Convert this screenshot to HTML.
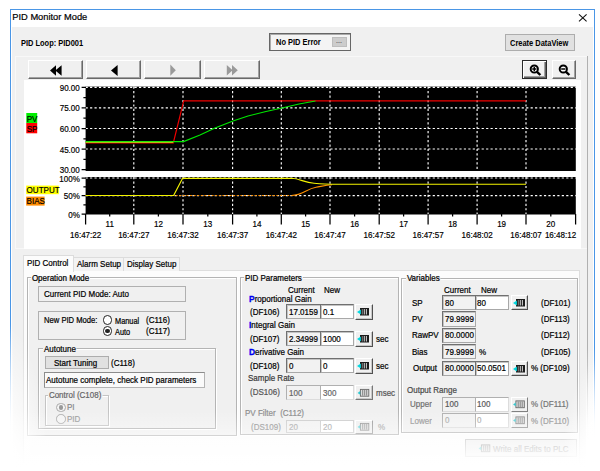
<!DOCTYPE html>
<html><head><meta charset="utf-8"><title>PID Monitor Mode</title>
<style>
html,body{margin:0;padding:0;background:#fff;}
body{width:600px;height:471px;overflow:hidden;position:relative;font-family:"Liberation Sans",sans-serif;font-size:8px;color:#000;}
.a{position:absolute;box-sizing:border-box;}
.t{position:absolute;white-space:pre;line-height:10px;height:10px;font-size:9.1px;transform:scaleX(.88);transform-origin:0 50%;-webkit-text-stroke:0.22px currentColor;}
.t b{font-size:9.6px;color:#0000f0;-webkit-text-stroke:0.3px #0000f0;line-height:0;}
.b{font-weight:bold;font-size:8.4px;transform:scaleX(.89);-webkit-text-stroke:0;}
#win{left:10px;top:9px;width:585px;height:470px;border:1px solid #4a96e6;background:#fff;}
#body{left:12px;top:26.5px;width:581px;height:450px;background:#f0f0f0;}
.btn{background:#f0f0f0;border:1px solid;border-color:#fff #696969 #696969 #fff;box-shadow:inset -1px -1px 0 #a0a0a0;}
.sb{background:#f0f0f0;border:1px solid;border-color:#fff #505050 #505050 #fff;box-shadow:inset -1px -1px 0 #c8c8c8;}
.flat{background:#e1e1e1;border:1px solid #adadad;}
.grp{border:1px solid #b4b4b4;background:#f0f0f0;box-shadow:inset 1px 1px 0 #fff, 1px 1px 0 #fff;}
.leg{background:linear-gradient(#fcfcfc 0,#fcfcfc 45%,#f0f0f0 45%);padding:0 1px;}
.leg2{background:#f0f0f0;padding:0 1px;}
.sunk{border:1px solid;border-color:#707070 #a8a8a8 #a8a8a8 #707070;box-shadow:inset 1px 1px 0 #c4c4c4;background:#f2f2f2;}
.sunk.w{background:#fff;}
.sunk.d{border-color:#b0b0b0 #dcdcdc #dcdcdc #b0b0b0;box-shadow:none;}
.box{border:1px solid #b0b0b0;background:#f0f0f0;}
.g1{color:#555;}
.g2{color:#a8a8a8;}
.radio{width:9.8px;height:9.8px;border-radius:50%;border:1.1px solid #222;background:#fff;}
.radio.on::after{content:"";position:absolute;left:1.5px;top:1.5px;width:4.6px;height:4.6px;border-radius:50%;background:#222;}
.radio.dis{border-color:#aaa;background:#f4f4f4;}
.radio.dis.on::after{background:#999;}
</style></head><body>
<div class="a" id="win"></div>
<div class="a" id="body"></div>
<!-- title bar -->
<span class="t" style="left:12.3px;top:11.8px;font-size:9.3px;line-height:11px;height:11px;transform:none;-webkit-text-stroke:0.2px #000;">PID Monitor Mode</span>
<svg class="a" style="left:578px;top:13px" width="10" height="10" viewBox="0 0 10 10"><path d="M1 1.4 L8.6 8.4 M8.6 1.4 L1 8.4" stroke="#111" stroke-width="1.1" fill="none"/></svg>
<!-- top row -->
<span class="t b" style="left:21px;top:38px;">PID Loop: PID001</span>
<div class="a" style="left:269px;top:33px;width:82px;height:17.5px;border:1px solid #666;box-shadow:inset 1px 1px 0 #aaa;background:#f4f4f4;"></div>
<span class="t b" style="left:276px;top:37px;">No PID Error</span>
<div class="a" style="left:332px;top:37px;width:15px;height:10px;background:#ccc;border:1px solid #bdbdbd;"></div>
<span class="t" style="left:336px;top:36px;color:#666;font-size:8px;">...</span>
<div class="a flat" style="left:505px;top:34px;width:70px;height:17px;"></div>
<span class="t b" style="left:510px;top:38px;">Create DataView</span>
<!-- chart panel -->
<div class="a" style="left:15px;top:56px;width:573px;height:193px;border:1px solid #f8f8f8;border-right:1px solid #a8a8a8;"></div>
<div class="a" style="left:587px;top:56px;width:1px;height:420px;background:#b0b0b0;"></div>
<div class="a" style="left:24px;top:80px;width:557px;height:169px;background:#fff;"></div>
<!-- nav buttons -->
<div class="a btn" style="left:28px;top:60px;width:55px;height:18.5px;"></div>
<div class="a btn" style="left:85.5px;top:60px;width:55px;height:18.5px;"></div>
<div class="a btn" style="left:144px;top:60px;width:56.5px;height:18.5px;"></div>
<div class="a btn" style="left:203.5px;top:60px;width:56px;height:18.5px;"></div>
<svg class="a" style="left:27px;top:60px" width="240" height="18" viewBox="0 0 240 18">
<path d="M23 10.5 L29 5.2 L29 15.8 Z M28.3 10.5 L34.6 5.2 L34.6 15.8 Z" fill="#000"/>
<path d="M84 10.5 L90.6 5 L90.6 16 Z" fill="#000"/>
<path d="M143.3 4.6 L148.8 10.2 L143.3 15.8 Z" fill="#9a9a9a"/>
<path d="M199.8 5 L205.6 10.3 L199.8 15.6 Z M205 5 L210.8 10.3 L205 15.6 Z" fill="#9a9a9a"/>
</svg>
<!-- zoom buttons -->
<div class="a" style="left:522px;top:60px;width:24.5px;height:19px;background:#f0f0f0;border:1px solid #2a2a2a;box-shadow:inset 1px 1px 0 #fff, inset -1px -1px 0 #606060, inset -2px -2px 0 #a0a0a0;"></div>
<div class="a btn" style="left:552px;top:60px;width:24px;height:19px;"></div>
<svg class="a" style="left:522px;top:60px" width="56" height="20" viewBox="0 0 56 20">
<circle cx="12.3" cy="9" r="3.6" fill="#fff" stroke="#000" stroke-width="2"/><path d="M15 11.8 L18.4 15" stroke="#000" stroke-width="2.4"/><path d="M10.2 9 H14.4 M12.3 6.9 V11.1" stroke="#000" stroke-width="1.5"/>
<circle cx="41.3" cy="9" r="3.6" fill="#fff" stroke="#000" stroke-width="2"/><path d="M44 11.8 L47.4 15" stroke="#000" stroke-width="2.4"/><path d="M39.2 9 H43.4" stroke="#000" stroke-width="1.5"/>
</svg>
<svg class="a" style="left:24px;top:80px" width="557" height="169" viewBox="24 80 557 169" font-family="Liberation Sans, sans-serif" font-size="9.7" fill="#000" stroke="#000" stroke-width="0">
<rect x="85.6" y="86.6" width="490.2" height="84.4" fill="#000"/>
<rect x="85.6" y="177" width="490.2" height="37.5" fill="#000"/>
<path d="M85.6 87.3 H575.8 M85.6 107.9 H575.8 M85.6 128.5 H575.8 M85.6 149.0 H575.8 M85.6 178.0 H575.8 M85.6 195.6 H575.8 M133.8 86.6 V171 M133.8 177 V214.5 M183.0 86.6 V171 M183.0 177 V214.5 M232.6 86.6 V171 M232.6 177 V214.5 M281.3 86.6 V171 M281.3 177 V214.5 M330.0 86.6 V171 M330.0 177 V214.5 M379.2 86.6 V171 M379.2 177 V214.5 M428.1 86.6 V171 M428.1 177 V214.5 M477.1 86.6 V171 M477.1 177 V214.5 M526.0 86.6 V171 M526.0 177 V214.5" stroke="#fff" stroke-width="1.15" stroke-dasharray="2.2 2.25" fill="none"/>
<path d="M81.6 87.3 H86 M81.6 107.9 H86 M81.6 128.5 H86 M81.6 149.0 H86 M81.6 169.6 H86 M83.4 97.6 H86 M83.4 118.2 H86 M83.4 138.8 H86 M83.4 159.3 H86 M81.6 178.0 H86 M81.6 195.6 H86 M81.6 214.0 H86 M83.4 186.8 H86 M83.4 204.8 H86 M85.6 214 V224.6 M133.8 214 V224.6 M183.0 214 V224.6 M232.6 214 V224.6 M281.3 214 V224.6 M330.0 214 V224.6 M379.2 214 V224.6 M428.1 214 V224.6 M477.1 214 V224.6 M526.0 214 V224.6 M575.6 214 V224.6 M109.7 214 V216.6 M158.4 214 V216.6 M207.8 214 V216.6 M256.9 214 V216.6 M305.6 214 V216.6 M354.6 214 V216.6 M403.6 214 V216.6 M452.6 214 V216.6 M501.6 214 V216.6 M550.8 214 V216.6" stroke="#000" stroke-width="1.25" fill="none"/>
<g fill="none" stroke-width="1.15" stroke-linejoin="round">
<path d="M85.6 143 H173.3 L183.7 100.8 H526" stroke="#f00000"/>
<path d="M85.6 141.6 H183.5 L200 135 L215 128 L233 121 L248 116 L266 111.5 L282 108 L299 104 L315.5 101" stroke="#00e800"/>
<path d="M85.6 142.35 H173" stroke="#d4e818" stroke-width="0.9"/>
<path d="M85.6 195.5 H291.5" stroke="#ff9000" stroke-dasharray="2 1.6"/>
<path d="M291.5 195.5 C303 195.5 306 189 316 187.3 C322 186.2 326 185 332 184.7" stroke="#ff9000"/>
<path d="M85.6 195.5 H173.6 L182.6 178.3 H291.5 C300 178.5 304 182.6 314 183.3 C322 183.9 326 184.2 332 184.2 H526" stroke="#f4f400"/>
</g>
<text transform="translate(79.8,90.8) scale(0.83,1)" text-anchor="end" stroke-width="0.2">90.00</text>
<text transform="translate(79.8,111.4) scale(0.83,1)" text-anchor="end" stroke-width="0.2">75.00</text>
<text transform="translate(79.8,132.0) scale(0.83,1)" text-anchor="end" stroke-width="0.2">60.00</text>
<text transform="translate(79.8,152.5) scale(0.83,1)" text-anchor="end" stroke-width="0.2">45.00</text>
<text transform="translate(79.8,173.1) scale(0.83,1)" text-anchor="end" stroke-width="0.2">30.00</text>
<text transform="translate(79.8,181.5) scale(0.83,1)" text-anchor="end" stroke-width="0.2">100%</text>
<text transform="translate(79.8,199.1) scale(0.83,1)" text-anchor="end" stroke-width="0.2">50%</text>
<text transform="translate(79.8,217.5) scale(0.83,1)" text-anchor="end" stroke-width="0.2">0%</text>
<text transform="translate(109.7,226.8) scale(0.83,1)" text-anchor="middle" stroke-width="0.2">11</text>
<text transform="translate(158.4,226.8) scale(0.83,1)" text-anchor="middle" stroke-width="0.2">12</text>
<text transform="translate(207.8,226.8) scale(0.83,1)" text-anchor="middle" stroke-width="0.2">13</text>
<text transform="translate(256.9,226.8) scale(0.83,1)" text-anchor="middle" stroke-width="0.2">14</text>
<text transform="translate(305.6,226.8) scale(0.83,1)" text-anchor="middle" stroke-width="0.2">15</text>
<text transform="translate(354.6,226.8) scale(0.83,1)" text-anchor="middle" stroke-width="0.2">16</text>
<text transform="translate(403.6,226.8) scale(0.83,1)" text-anchor="middle" stroke-width="0.2">17</text>
<text transform="translate(452.6,226.8) scale(0.83,1)" text-anchor="middle" stroke-width="0.2">18</text>
<text transform="translate(501.6,226.8) scale(0.83,1)" text-anchor="middle" stroke-width="0.2">19</text>
<text transform="translate(550.8,226.8) scale(0.83,1)" text-anchor="middle" stroke-width="0.2">20</text>
<text transform="translate(85.6,238.4) scale(0.83,1)" text-anchor="middle" stroke-width="0.2">16:47:22</text>
<text transform="translate(133.8,238.4) scale(0.83,1)" text-anchor="middle" stroke-width="0.2">16:47:27</text>
<text transform="translate(183.0,238.4) scale(0.83,1)" text-anchor="middle" stroke-width="0.2">16:47:32</text>
<text transform="translate(232.6,238.4) scale(0.83,1)" text-anchor="middle" stroke-width="0.2">16:47:37</text>
<text transform="translate(281.3,238.4) scale(0.83,1)" text-anchor="middle" stroke-width="0.2">16:47:42</text>
<text transform="translate(330.0,238.4) scale(0.83,1)" text-anchor="middle" stroke-width="0.2">16:47:47</text>
<text transform="translate(379.2,238.4) scale(0.83,1)" text-anchor="middle" stroke-width="0.2">16:47:52</text>
<text transform="translate(428.1,238.4) scale(0.83,1)" text-anchor="middle" stroke-width="0.2">16:47:57</text>
<text transform="translate(477.1,238.4) scale(0.83,1)" text-anchor="middle" stroke-width="0.2">16:48:02</text>
<text transform="translate(526.0,238.4) scale(0.83,1)" text-anchor="middle" stroke-width="0.2">16:48:07</text>
<text transform="translate(576.2,238.4) scale(0.83,1)" text-anchor="end" stroke-width="0.2">16:48:12</text>
<rect x="26.3" y="113" width="10.9" height="10" fill="#00f000"/><text transform="translate(26.7,121.7) scale(0.83,1)" text-anchor="start" stroke-width="0.2">PV</text>
<rect x="26.3" y="123" width="10.9" height="10.3" fill="#ff0000"/><text transform="translate(26.7,131.8) scale(0.83,1)" text-anchor="start" stroke-width="0.2">SP</text>
<rect x="26.2" y="185.6" width="32.6" height="8.6" fill="#ffff00"/><text transform="translate(26.6,193.2) scale(0.83,1)" text-anchor="start" stroke-width="0.2">OUTPUT</text>
<rect x="26.2" y="196.6" width="18.4" height="9" fill="#ff8c00"/><text transform="translate(26.6,204.4) scale(0.83,1)" text-anchor="start" stroke-width="0.2">BIAS</text>
</svg>
<div class="a" style="left:23px;top:270px;width:557px;height:200px;background:#fcfcfc;border:1px solid #dedede;"></div>
<div class="a" style="left:73px;top:257px;width:51px;height:14px;background:#f3f3f3;border:1px solid #dcdcdc;border-bottom:none;"></div>
<div class="a" style="left:123px;top:257px;width:57px;height:14px;background:#f3f3f3;border:1px solid #dcdcdc;border-bottom:none;"></div>
<div class="a" style="left:23px;top:255px;width:51px;height:17px;background:#fcfcfc;border:1px solid #dcdcdc;border-bottom:none;"></div>
<span class="t" style="left:27px;top:258px;">PID Control</span>
<span class="t" style="left:77px;top:259px;">Alarm Setup</span>
<span class="t" style="left:127px;top:259px;">Display Setup</span>
<!-- Operation Mode -->
<div class="a grp" style="left:27px;top:277px;width:210px;height:159px;"></div>
<span class="t leg" style="left:31px;top:273px;">Operation Mode</span>
<div class="a box" style="left:38px;top:286px;width:148px;height:16px;"></div>
<span class="t" style="left:44px;top:289px;">Current PID Mode: Auto</span>
<div class="a box" style="left:38px;top:311px;width:148px;height:29px;"></div>
<span class="t" style="left:44px;top:315px;transform:scaleX(.84)">New PID Mode:</span>
<div class="a radio" style="left:102.6px;top:315.4px;"></div>
<span class="t" style="left:114.5px;top:316px;font-size:8.4px">Manual</span>
<span class="t" style="left:146px;top:315px;">(C116)</span>
<div class="a radio on" style="left:102.6px;top:326.2px;"></div>
<span class="t" style="left:114.5px;top:327px;font-size:8.4px">Auto</span>
<span class="t" style="left:146px;top:326px;">(C117)</span>
<!-- Autotune -->
<div class="a grp" style="left:38px;top:347.5px;width:178px;height:81.5px;"></div>
<span class="t leg2" style="left:43px;top:343.6px;">Autotune</span>
<div class="a flat" style="left:44.5px;top:356px;width:64.5px;height:13px;"></div>
<span class="t" style="left:53.8px;top:358px;">Start Tuning</span>
<span class="t" style="left:111px;top:358px;">(C118)</span>
<div class="a box" style="left:44px;top:372px;width:161px;height:16px;background:#fafafa;border-color:#8c8c8c #b4b4b4 #b4b4b4 #8c8c8c"></div>
<span class="t" style="left:46px;top:375px;">Autotune complete, check PID parameters</span>
<div class="a grp" style="left:44.5px;top:394.5px;width:64.5px;height:31px;border-color:#c4c4c4;"></div>
<span class="t leg2" style="left:48px;top:389.5px;color:#666;">Control (C108)</span>
<div class="a radio dis on" style="left:56px;top:402.5px;width:9.5px;height:9.5px"></div>
<span class="t g2" style="left:67px;top:402px;color:#888;">PI</span>
<div class="a radio dis" style="left:56px;top:414px;width:9.5px;height:9.5px"></div>
<span class="t g2" style="left:67px;top:414px;color:#999;">PID</span>
<!-- PID Parameters -->
<div class="a grp" style="left:240.3px;top:276.7px;width:158.5px;height:158px;"></div>
<span class="t leg" style="left:244px;top:273px;">PID Parameters</span>
<span class="t" style="left:288px;top:285px;">Current</span>
<span class="t" style="left:324px;top:285px;">New</span>
<span class="t" style="left:249px;top:294px;"><b>P</b>roportional Gain</span>
<span class="t" style="left:250px;top:307px;">(DF106)</span>
<div class="a sunk" style="left:286px;top:304px;width:35px;height:15px;"></div><span class="t" style="left:289px;top:307px;">17.0159</span>
<div class="a sunk w" style="left:320px;top:304px;width:34px;height:15px;"></div><span class="t" style="left:323px;top:307px;">0.1</span>
<div class="a sb" style="left:355px;top:304px;width:18px;height:16px;"></div>
<span class="t" style="left:249px;top:320px;"><b>I</b>ntegral Gain</span>
<span class="t" style="left:250px;top:334px;">(DF107)</span>
<div class="a sunk" style="left:286px;top:331px;width:35px;height:15px;"></div><span class="t" style="left:289px;top:334px;">2.34999</span>
<div class="a sunk w" style="left:320px;top:331px;width:34px;height:15px;"></div><span class="t" style="left:323px;top:334px;">1000</span>
<div class="a sb" style="left:355px;top:331px;width:18px;height:16px;"></div>
<span class="t" style="left:376px;top:334px;">sec</span>
<span class="t" style="left:249px;top:347px;"><b>D</b>erivative Gain</span>
<span class="t" style="left:250px;top:361px;">(DF108)</span>
<div class="a sunk" style="left:286px;top:358px;width:35px;height:15px;"></div><span class="t" style="left:289px;top:361px;">0</span>
<div class="a sunk w" style="left:320px;top:358px;width:34px;height:15px;"></div><span class="t" style="left:323px;top:361px;">0</span>
<div class="a sb" style="left:355px;top:358px;width:18px;height:16px;"></div>
<span class="t" style="left:376px;top:361px;">sec</span>
<span class="t" style="left:248px;top:373px;color:#3a3a3a">Sample Rate</span>
<span class="t" style="left:250px;top:387px;color:#555">(DS106)</span>
<div class="a sunk d" style="left:286px;top:385px;width:35px;height:15px;"></div><span class="t" style="left:289px;top:388px;color:#666">100</span>
<div class="a sunk d w" style="left:320px;top:385px;width:34px;height:15px;"></div><span class="t" style="left:323px;top:388px;color:#666">300</span>
<div class="a sb" style="left:355px;top:385px;width:18px;height:15px;border-color:#fff #777 #777 #fff;"></div>
<span class="t" style="left:376px;top:388px;color:#555">msec</span>
<span class="t" style="left:245px;top:408px;color:#8c8c8c">PV Filter  (C112)</span>
<span class="t" style="left:251px;top:422px;color:#909090">(DS109)</span>
<div class="a sunk d" style="left:286px;top:420px;width:35px;height:13px;border-color:#ccc"></div><span class="t g2" style="left:289px;top:422px;">20</span>
<div class="a sunk d w" style="left:320px;top:420px;width:34px;height:13px;border-color:#ccc"></div><span class="t g2" style="left:323px;top:422px;">20</span>
<div class="a sb" style="left:355px;top:420px;width:18px;height:13.5px;border-color:#fff #999 #999 #fff;box-shadow:none"></div>
<span class="t g2" style="left:378px;top:422px;">%</span>
<!-- Variables -->
<div class="a grp" style="left:401px;top:278px;width:177px;height:155px;"></div>
<span class="t leg" style="left:406px;top:273px;">Variables</span>
<span class="t" style="left:444px;top:285px;">Current</span>
<span class="t" style="left:481px;top:285px;">New</span>
<span class="t" style="left:412px;top:298px;">SP</span>
<div class="a sunk" style="left:442px;top:295px;width:34px;height:15px;"></div><span class="t" style="left:445px;top:298px;">80</span>
<div class="a sunk w" style="left:475px;top:295px;width:34px;height:15px;"></div><span class="t" style="left:477px;top:298px;">80</span>
<div class="a sb" style="left:511px;top:295px;width:17px;height:15px;"></div>
<span class="t" style="left:541px;top:298px;">(DF101)</span>
<span class="t" style="left:412px;top:314px;">PV</span>
<div class="a sunk" style="left:442px;top:311px;width:34px;height:16px;"></div><span class="t" style="left:445px;top:314px;">79.9999</span>
<span class="t" style="left:541px;top:314px;">(DF113)</span>
<span class="t" style="left:412px;top:330px;">RawPV</span>
<div class="a sunk" style="left:442px;top:328px;width:34px;height:15px;"></div><span class="t" style="left:445px;top:330px;">80.0000</span>
<span class="t" style="left:541px;top:330px;">(DF112)</span>
<span class="t" style="left:412px;top:347px;">Bias</span>
<div class="a sunk" style="left:442px;top:344px;width:34px;height:15px;"></div><span class="t" style="left:445px;top:347px;">79.9999</span>
<span class="t" style="left:479px;top:347px;">%</span>
<span class="t" style="left:541px;top:347px;">(DF105)</span>
<span class="t" style="left:413px;top:363px;">Output</span>
<div class="a sunk" style="left:442px;top:361px;width:34px;height:15px;"></div><span class="t" style="left:445px;top:363px;">80.0000</span>
<div class="a sunk w" style="left:475px;top:361px;width:34px;height:15px;"></div><span class="t" style="left:477px;top:363px;">50.0501</span>
<div class="a sb" style="left:511px;top:361px;width:17px;height:15px;"></div>
<span class="t" style="left:531px;top:363px;">% (DF109)</span>
<span class="t" style="left:407px;top:385px;color:#4a4a4a">Output Range</span>
<span class="t" style="left:410px;top:399px;color:#707070">Upper</span>
<div class="a sunk d" style="left:442px;top:396.5px;width:34px;height:15.5px;"></div><span class="t" style="left:445px;top:398.5px;color:#5a5a5a">100</span>
<div class="a sunk d w" style="left:475px;top:396.5px;width:34px;height:15.5px;"></div><span class="t" style="left:477px;top:398.5px;color:#5a5a5a">100</span>
<div class="a sb" style="left:510.5px;top:397px;width:17px;height:14.5px;border-color:#fff #808080 #808080 #fff;box-shadow:none"></div>
<span class="t" style="left:531px;top:399px;color:#767676">% (DF111)</span>
<span class="t" style="left:410px;top:416px;color:#909090">Lower</span>
<div class="a sunk d" style="left:442px;top:412.5px;width:34px;height:15px;"></div><span class="t g2" style="left:445px;top:415px;">0</span>
<div class="a sunk d w" style="left:475px;top:412.5px;width:34px;height:15px;"></div><span class="t g2" style="left:477px;top:415px;">0</span>
<div class="a sb" style="left:510.5px;top:413px;width:17px;height:14.5px;border-color:#fff #909090 #909090 #fff;box-shadow:none"></div>
<span class="t" style="left:531px;top:416px;color:#909090">% (DF110)</span>
<!-- write all -->
<div class="a flat" style="left:465px;top:439px;width:112px;height:18px;background:#eee;border-color:#bbb"></div>
<span class="t" style="left:493px;top:444px;color:#999">Write all Edits to PLC</span>
<!-- icons -->
<svg class="a" style="left:0;top:0;pointer-events:none" width="600" height="471" viewBox="0 0 600 471">

<g transform="translate(357,308)"><rect x="3" y="0" width="9" height="7.5" fill="#1c1c1c"/><path d="M7.3 1 V6.5 M9.4 1 V6.5" stroke="#e8e8e8" stroke-width="0.9"/><path d="M5.3 1 V6.5" stroke="#999" stroke-width="0.8"/><path d="M0 3.9 L3.9 1.4 V6.4 Z" fill="#00d8e0"/></g><g transform="translate(357,335)"><rect x="3" y="0" width="9" height="7.5" fill="#1c1c1c"/><path d="M7.3 1 V6.5 M9.4 1 V6.5" stroke="#e8e8e8" stroke-width="0.9"/><path d="M5.3 1 V6.5" stroke="#999" stroke-width="0.8"/><path d="M0 3.9 L3.9 1.4 V6.4 Z" fill="#00d8e0"/></g><g transform="translate(357,362)"><rect x="3" y="0" width="9" height="7.5" fill="#1c1c1c"/><path d="M7.3 1 V6.5 M9.4 1 V6.5" stroke="#e8e8e8" stroke-width="0.9"/><path d="M5.3 1 V6.5" stroke="#999" stroke-width="0.8"/><path d="M0 3.9 L3.9 1.4 V6.4 Z" fill="#00d8e0"/></g><g transform="translate(357,389)"><rect x="3.4" y="0.4" width="8.4" height="6.8" fill="#dedede" stroke="#686868" stroke-width="0.9"/><path d="M5.7 1 V6.6 M7.7 1 V6.6 M9.7 1 V6.6" stroke="#787878" stroke-width="0.9"/><path d="M0.6 3.9 L3.2 2 V5.8 Z" fill="#30c8d0"/></g><g transform="translate(357,423)" opacity="0.7"><rect x="3.4" y="0.4" width="8.4" height="6.8" fill="#dedede" stroke="#686868" stroke-width="0.9"/><path d="M5.7 1 V6.6 M7.7 1 V6.6 M9.7 1 V6.6" stroke="#787878" stroke-width="0.9"/><path d="M0.6 3.9 L3.2 2 V5.8 Z" fill="#30c8d0"/></g>
<g transform="translate(513,299)"><rect x="3" y="0" width="9" height="7.5" fill="#1c1c1c"/><path d="M7.3 1 V6.5 M9.4 1 V6.5" stroke="#e8e8e8" stroke-width="0.9"/><path d="M5.3 1 V6.5" stroke="#999" stroke-width="0.8"/><path d="M0 3.9 L3.9 1.4 V6.4 Z" fill="#00d8e0"/></g><g transform="translate(513,365)"><rect x="3" y="0" width="9" height="7.5" fill="#1c1c1c"/><path d="M7.3 1 V6.5 M9.4 1 V6.5" stroke="#e8e8e8" stroke-width="0.9"/><path d="M5.3 1 V6.5" stroke="#999" stroke-width="0.8"/><path d="M0 3.9 L3.9 1.4 V6.4 Z" fill="#00d8e0"/></g><g transform="translate(512.5,400.5)"><rect x="3.4" y="0.4" width="8.4" height="6.8" fill="#dedede" stroke="#686868" stroke-width="0.9"/><path d="M5.7 1 V6.6 M7.7 1 V6.6 M9.7 1 V6.6" stroke="#787878" stroke-width="0.9"/><path d="M0.6 3.9 L3.2 2 V5.8 Z" fill="#30c8d0"/></g><g transform="translate(512.5,416.5)" opacity="0.8"><rect x="3.4" y="0.4" width="8.4" height="6.8" fill="#dedede" stroke="#686868" stroke-width="0.9"/><path d="M5.7 1 V6.6 M7.7 1 V6.6 M9.7 1 V6.6" stroke="#787878" stroke-width="0.9"/><path d="M0.6 3.9 L3.2 2 V5.8 Z" fill="#30c8d0"/></g><g transform="translate(478,444.5)" opacity="0.8"><rect x="3.4" y="0.4" width="8.4" height="6.8" fill="#dedede" stroke="#686868" stroke-width="0.9"/><path d="M5.7 1 V6.6 M7.7 1 V6.6 M9.7 1 V6.6" stroke="#787878" stroke-width="0.9"/><path d="M0.6 3.9 L3.2 2 V5.8 Z" fill="#30c8d0"/></g>
</svg>
<!-- fade -->
<div class="a" style="left:0;top:411px;width:600px;height:60px;background:linear-gradient(to bottom,rgba(255,255,255,0) 0%,rgba(255,255,255,0.3) 30%,rgba(255,255,255,0.66) 60%,rgba(255,255,255,0.9) 78%,#fff 93%);"></div>
<div class="a" style="left:0;top:300px;width:80px;height:171px;background:radial-gradient(ellipse 48px 150px at 0 100%,rgba(255,255,255,1) 0%,rgba(255,255,255,0.92) 35%,rgba(255,255,255,0) 100%);"></div>
<div class="a" style="left:540px;top:340px;width:60px;height:131px;background:radial-gradient(ellipse 38px 112px at 100% 100%,rgba(255,255,255,1) 0%,rgba(255,255,255,0.92) 35%,rgba(255,255,255,0) 100%);"></div>
<div class="a" style="left:9px;top:325px;width:4px;height:146px;background:linear-gradient(to bottom,rgba(255,255,255,0) 0%,rgba(255,255,255,0.55) 45%,rgba(255,255,255,0.9) 70%,#fff 85%);"></div>
<div class="a" style="left:586px;top:348px;width:10px;height:123px;background:linear-gradient(to bottom,rgba(255,255,255,0) 0%,rgba(255,255,255,0.55) 40%,rgba(255,255,255,0.92) 65%,#fff 80%);"></div>
<div class="a" style="left:0;top:0;width:10px;height:471px;background:#fff;"></div>
<div class="a" style="left:595px;top:0;width:5px;height:471px;background:#fff;"></div>


</body></html>
